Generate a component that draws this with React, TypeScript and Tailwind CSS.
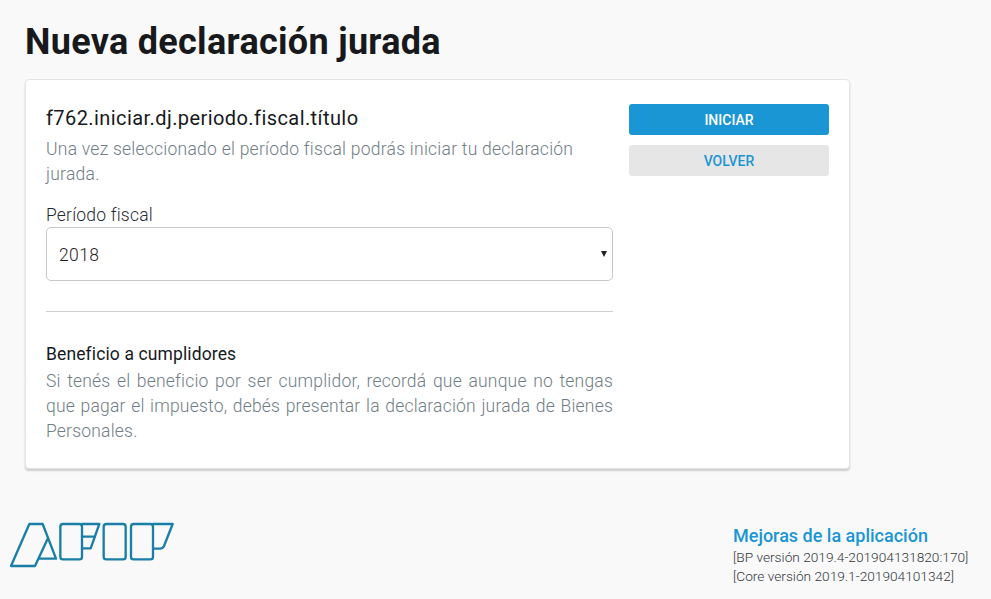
import React from 'react';

function Logo() {
  return (
    <svg width="190" height="70" viewBox="0 0 570 210" fill="none" stroke="#1a7fa8" strokeWidth="7" strokeLinejoin="round" strokeLinecap="round">
      {/* A */}
      <path d="M33 168 L88 42 H128 L168 146 H116 M33 168 H105 L143 86" />
      {/* F */}
      <rect x="181" y="42" width="65" height="106" rx="8" />
      <path d="M246 42 H298 L272 115 H246 M246 80 H285" />
      {/* I */}
      <rect x="311" y="42" width="66" height="106" rx="8" />
      {/* P */}
      <rect x="393" y="42" width="66" height="106" rx="8" />
      <path d="M459 42 H518 L492 108 Q488 116 480 116 H459" />
    </svg>
  );
}

export default function App() {
  return (
    <div className="h-[599px] bg-[#f9f9f9] font-['Roboto',sans-serif] overflow-hidden">
      <div className="pl-[25px] w-[850px]">
        <h1 className="pt-[18px] h-[79px] text-[36px] leading-[48px] font-bold text-[#17191c] tracking-[0.3px]">Nueva declaración jurada</h1>

        <div className="h-[390px] bg-white border border-[#e4e4e4] rounded-[4px] shadow-[0_2px_2px_rgba(0,0,0,0.18)] pl-[20px] pr-[20px] pt-[24px] flex gap-[16px]">
          <div className="w-[567px]">
            <h2 className="text-[20px] leading-[28px] text-[#17191c] tracking-[0.42px]">f762.iniciar.dj.periodo.fiscal.título</h2>
            <p className="mt-[5px] text-[17.5px] leading-[25px] font-light text-[#6f7d86] tracking-[0.25px]">
              Una vez seleccionado el período fiscal podrás iniciar tu declaración jurada.
            </p>
            <label className="block mt-[15px] text-[17.5px] leading-[26px] font-light text-[#1f2a33] tracking-[0.2px]">Período fiscal</label>
            <div className="mt-[-1px] h-[54px] border border-[#c9c9c9] rounded-[5px] flex items-center justify-between pl-[12px] pr-[4px] text-[17.5px] font-light text-[#1f2327] tracking-[0.4px]">
              <span className="pt-[3px]">2018</span>
              <span className="w-0 h-0 border-l-[3px] border-r-[3px] border-t-[6px] border-l-transparent border-r-transparent border-t-[#222] mr-[1px]" />
            </div>
            <div className="mt-[30px] border-t border-[#cfcfcf]" />
            <h3 className="mt-[31px] text-[17.5px] leading-[22px] text-[#17191c] tracking-[0.12px]">Beneficio a cumplidores</h3>
            <p className="mt-[4px] text-[17.5px] leading-[25px] font-light text-[#6f7d86] text-justify tracking-[0.2px]">
              Si tenés el beneficio por ser cumplidor, recordá que aunque no tengas que pagar el impuesto, debés presentar la declaración jurada de Bienes Personales.
            </p>
          </div>
          <div className="w-[200px] flex flex-col gap-[10px]">
            <button className="h-[31px] pt-[1px] rounded-[3px] bg-[#1a96d4] text-white text-[14px] font-medium">INICIAR</button>
            <button className="h-[31px] pt-[1px] rounded-[3px] bg-[#e6e6e6] text-[#1a96d4] text-[14px] font-medium">VOLVER</button>
          </div>
        </div>
      </div>

      <div className="mt-[41px] flex justify-between items-start">
        <Logo />
        <div className="mt-[14px] mr-[22px] w-[236px] text-[#33383d] text-[13.7px] leading-[19px] font-light whitespace-nowrap">
          <a className="block text-[18px] leading-[24px] font-medium text-[#1a96d4]">Mejoras de la aplicación</a>
          <div>[BP versión 2019.4-201904131820:170]</div>
          <div>[Core versión 2019.1-201904101342]</div>
        </div>
      </div>
    </div>
  );
}
